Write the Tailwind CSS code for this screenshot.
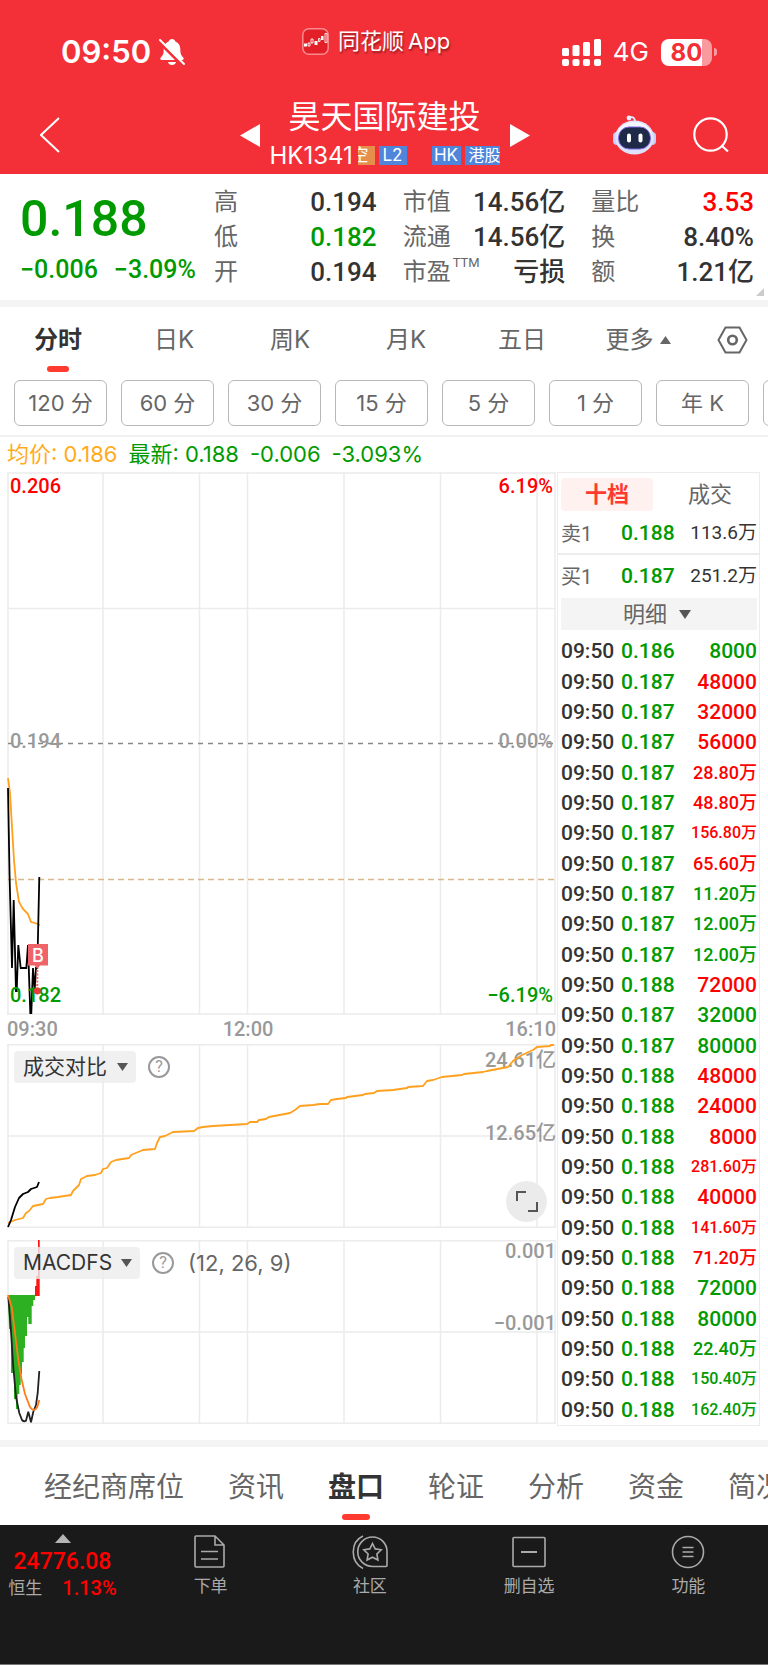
<!DOCTYPE html>
<html lang="zh-CN">

<head>
    <meta charset="UTF-8" />
    <meta name="viewport" content="width=device-width, initial-scale=1.0" />
    <title>昊天国际建投 HK1341</title>
    <script src="https://cdn.jsdelivr.net/npm/@tailwindcss/browser@4"></script>
</head>

<body class="bg-white text-[#333] font-[Inter,'Noto_Sans_CJK_SC',sans-serif] overflow-x-hidden">
    <!-- Header -->
    <header class="bg-[#f33038] text-white">
        <div class="h-24 pt-2 pl-[61px] pr-[51px] grid grid-cols-[241px_auto_1fr] items-center">
            <div class="flex items-center gap-2">
                <span class="text-[31px] leading-8 font-semibold">09:50</span>
                <svg class="w-[26px] h-7" viewBox="0 0 26 28" fill="none">
                    <path d="M13 1c1.800 0 3 1 3.300 2.400 3.500 1.300 5 4.200 5 7.600 0 5 1 6.600 3 8.600.8.900.4 2.400-1 2.400H2.700c-1.400 0-1.800-1.500-1-2.400 2-2 3-3.600 3-8.600 0-3.400 1.500-6.300 5-7.600C10 2 11.200 1 13 1zM9 24h8c-.4 2-2 3-4 3s-3.600-1-4-3z" fill="#fff" />
                    <path d="M0 4l24 24" stroke="#f33038" stroke-width="3" />
                    <path d="M1 2l24 24" stroke="#fff" stroke-width="2" stroke-linecap="round" />
                </svg>
            </div>
            <div class="self-start pt-[19px] flex items-center gap-[9px]">
                <svg class="w-[27px] h-[27px]" viewBox="0 0 27 27" fill="none">
                    <rect x=".8" y=".8" width="25.400" height="25.400" rx="6" fill="#e32028" stroke="#f98a8e" stroke-width="1.500" />
                    <path d="M2 15.500h3v3H2zM12.500 13h3v4h-3zM19 8h2.500v4H19z" fill="#fff" />
                    <path d="M6 15h2v3H6zM9 11h2v4H9zM16.500 10.500h1.500v3h-1.500zM23 5.500h2v9h-2z" stroke="#fff" stroke-width=".9" />
                </svg>
                <span class="flex gap-1 text-[22px] leading-7 [text-shadow:1px_2px_2px_rgba(0,0,0,.4)]"><span>同花顺</span><span>App</span></span>
            </div>
            <div class="flex items-center justify-end gap-3">
                <svg class="w-10 h-[27px]" viewBox="0 0 40 27" fill="#fff">
                    <rect x="1" y="9" width="7" height="8" rx="1.500" />
                    <rect x="11.500" y="6" width="7" height="11" rx="1.500" />
                    <rect x="22" y="3" width="7" height="14" rx="1.500" />
                    <rect x="33" y="0" width="7" height="17" rx="1.500" />
                    <rect x="1" y="20" width="7" height="7" rx="2" />
                    <rect x="11.500" y="20" width="7" height="7" rx="2" />
                    <rect x="22" y="20" width="7" height="7" rx="2" />
                    <rect x="33" y="20" width="7" height="7" rx="2" />
                </svg>
                <span class="text-[26px] leading-8">4G</span>
                <div class="flex items-center gap-[2px]">
                    <div class="w-[51px] h-[27px] rounded-lg bg-linear-to-r from-white from-80% to-[#f99a9e] to-80% text-[#f33038] text-[24px] leading-[27px] font-bold text-center">80</div>
                    <div class="w-[3px] h-2 rounded-r-full bg-[#f99a9e]"></div>
                </div>
            </div>
        </div>

        <div class="h-[78px] pl-10 pr-[39px] grid grid-cols-[1fr_auto_1fr] items-center">
            <button aria-label="返回" class="w-5">
                <svg class="w-5 h-9" viewBox="0 0 20 36" fill="none" stroke="#fff" stroke-width="2"><path d="M19 1L1 18l18 17" /></svg>
            </button>
            <div class="flex items-center gap-[10px]">
                <button aria-label="上一个">
                    <svg class="w-5 h-[23px]" viewBox="0 0 20 23" fill="#fff"><path d="M20 0v23L0 11.500z" /></svg>
                </button>
                <div class="w-[230px] h-[78px]">
                    <h1 class="text-[32px] leading-[41px] text-center">昊天国际建投</h1>
                    <div class="pt-[6px] flex items-center h-[30px] text-[17px] leading-[19px]">
                        <span class="w-[88px] text-[24px]">HK1341</span>
                        <span class="w-[17px] h-[19px] bg-[#e68f4a] overflow-hidden flex justify-end pr-[6px]"><span class="shrink-0">空</span></span>
                        <span class="ml-1 w-[28px] h-[19px] bg-[#4f86dc] text-center">L2</span>
                        <span class="ml-[25px] w-[29px] h-[19px] bg-[#4f86dc] text-center">HK</span>
                        <span class="ml-1 w-[35px] h-[19px] bg-[#4f86dc] pl-1 text-[16px] overflow-hidden whitespace-nowrap">港股</span>
                    </div>
                </div>
                <button aria-label="下一个">
                    <svg class="w-5 h-[23px]" viewBox="0 0 20 23" fill="#fff"><path d="M0 0v23l20-11.500z" /></svg>
                </button>
            </div>
            <div class="flex items-center justify-end gap-[37px]">
                <button aria-label="智能助手">
                    <svg class="w-[43px] h-10" viewBox="0 0 43 40" fill="none">
                        <path d="M16 3c4-2 6 0 6 4" stroke="#e9edff" stroke-width="1.800" />
                        <circle cx="16" cy="3" r="2.400" fill="#e9edff" />
                        <rect x="0" y="17" width="8" height="13" rx="4" fill="#c9cdf5" />
                        <rect x="35" y="17" width="8" height="13" rx="4" fill="#c9cdf5" />
                        <ellipse cx="21.500" cy="22.500" rx="19.500" ry="17" fill="#dfe2fb" />
                        <ellipse cx="21.500" cy="20" rx="17" ry="13" fill="#f6f8ff" />
                        <rect x="5.500" y="12" width="32" height="22" rx="10.500" fill="#1f2a48" stroke="#7b6be6" />
                        <rect x="14" y="18.500" width="4" height="9" rx="2" fill="#fff" />
                        <rect x="25.500" y="18.500" width="4" height="9" rx="2" fill="#fff" />
                    </svg>
                </button>
                <button aria-label="搜索">
                    <svg class="w-9 h-9" viewBox="0 0 36 36" fill="none" stroke="#fff" stroke-width="2.200"><circle cx="17.500" cy="17.500" r="16.200" /><path d="M28.500 28.500l6.500 6" /></svg>
                </button>
            </div>
        </div>
    </header>

    <!-- Quote -->
    <section class="relative pt-[11px] pb-[10px] pl-5 pr-[14px] grid grid-cols-[168px_repeat(3,minmax(0,1fr))] gap-x-[26px] font-[Roboto,'Noto_Sans_CJK_SC',sans-serif] border-b-[7px] border-[#f4f4f4]">
        <div class="text-[#009a00] font-medium whitespace-nowrap">
            <p class="text-[50px] leading-[68px]">0.188</p>
            <p class="text-[25px] leading-[34px] flex gap-4"><span>−0.006</span><span>−3.09%</span></p>
        </div>
        <dl class="grid grid-cols-[auto_1fr] text-[26px] leading-[35px] [&>dt]:text-[24px] [&>dt]:text-[#666] [&>dd]:text-right [&>dd]:font-medium">
            <dt>高</dt><dd>0.194</dd>
            <dt>低</dt><dd class="text-[#009a00]">0.182</dd>
            <dt>开</dt><dd>0.194</dd>
        </dl>
        <dl class="grid grid-cols-[auto_1fr] text-[26px] leading-[35px] whitespace-nowrap [&>dt]:text-[24px] [&>dt]:text-[#666] [&>dd]:text-right [&>dd]:font-medium">
            <dt>市值</dt><dd>14.56亿</dd>
            <dt>流通</dt><dd>14.56亿</dd>
            <dt class="flex">市盈<span class="w-0 pl-[2px] text-[13px] leading-[16px]">TTM</span></dt><dd>亏损</dd>
        </dl>
        <dl class="grid grid-cols-[auto_1fr] text-[26px] leading-[35px] whitespace-nowrap [&>dt]:text-[24px] [&>dt]:text-[#666] [&>dd]:text-right [&>dd]:font-medium">
            <dt>量比</dt><dd class="text-[#ff0000]">3.53</dd>
            <dt>换</dt><dd>8.40%</dd>
            <dt>额</dt><dd>1.21亿</dd>
        </dl>
        <svg class="absolute right-1 bottom-1 w-2 h-2" viewBox="0 0 8 8" fill="#ccc"><path d="M8 0v8H0z" /></svg>
    </section>

    <!-- Period tabs -->
    <nav class="h-[65px] flex text-[24px] text-[#666]">
        <button class="relative flex-1 font-bold text-[#333]">分时<span class="absolute left-1/2 bottom-0 -translate-x-1/2 w-[22px] h-[6px] rounded-full bg-[#ff3b30]"></span></button>
        <button class="flex-1">日K</button>
        <button class="flex-1">周K</button>
        <button class="flex-1">月K</button>
        <button class="flex-1">五日</button>
        <button class="flex-1 flex items-center justify-center gap-[6px]">更多<svg class="w-[11px] h-2" viewBox="0 0 11 8" fill="#666"><path d="M5.500 0L11 8H0z" /></svg></button>
        <button aria-label="设置" class="w-[72px] flex items-center justify-center">
            <svg class="w-[31px] h-7" viewBox="0 0 31 28" fill="none" stroke="#666" stroke-width="2"><path d="M8.500 1.500h14L29.500 14l-7 12.500h-14L1.500 14z" /><circle cx="15.500" cy="14" r="4.300" stroke-width="2.600" /></svg>
        </button>
    </nav>
    <div class="pt-2 pb-[9px] pl-[14px] flex gap-[14px] overflow-hidden border-b-2 border-[#f1f1f1] text-[22px] text-[#666] [&>button]:shrink-0 [&>button]:w-[93px] [&>button]:h-[46px] [&>button]:border [&>button]:border-[#b8b8b8] [&>button]:rounded-md">
        <button>120 分</button>
        <button>60 分</button>
        <button>30 分</button>
        <button>15 分</button>
        <button>5 分</button>
        <button>1 分</button>
        <button>年 K</button>
        <button>季 K</button>
    </div>
    <p class="h-[35px] pl-[7px] flex items-center gap-[11px] text-[22px] text-[#009a00] whitespace-nowrap">
        <span class="text-[#ffab1a]">均价: 0.186</span>
        <span>最新: 0.188</span>
        <span>-0.006</span>
        <span>-3.093%</span>
    </p>

    <!-- Charts and order book -->
    <main class="pl-[7px] pr-2 flex gap-px font-[Roboto,'Noto_Sans_CJK_SC',sans-serif]">
        <div class="flex-1 min-w-0 text-[20px] leading-6 font-medium text-[#999]">
            <div class="relative">
                <svg class="w-full h-[543px]" viewBox="0 0 549 543" preserveAspectRatio="none" fill="none">
                    <path d="M0 1h549M0 136.500h549M0 542h549M1 0v543M96 0v543M192.500 0v543M240.500 0v543M337 0v543M433.500 0v543M530 0v543M548 0v543" stroke="#ececec" stroke-width="1.500" />
                    <path d="M1 271.500h547" stroke="#888" stroke-width="1.300" stroke-dasharray="5 5" />
                    <path d="M1 407.500h547" stroke="#d9b98c" stroke-width="1.300" stroke-dasharray="6 4" />
                    <path d="M1 306l2 15 2 34 2 33 2 23 3 19 4 7 5 5 3 8 4 1 5 2" stroke="#ffa01e" stroke-width="1.800" />
                </svg>
                <span class="absolute left-[3px] top-[2px] text-[#ff0000]">0.206</span>
                <span class="absolute right-[3px] top-[2px] text-[#ff0000]">6.19%</span>
                <span class="absolute left-[3px] top-[257px]">0.194</span>
                <span class="absolute right-[3px] top-[257px]">0.00%</span>
                <span class="absolute right-[3px] bottom-2 text-[#009a00]">−6.19%</span>
                <svg class="absolute left-0 top-0 w-[60px] h-[543px]" viewBox="0 0 60 543" fill="none">
                    <path d="M1 316l1.500 85L5 496l1.700-68L9 519h.7l1.600-46 2.400 23h5.600l1.700-23 2.300 68h1l1.700-45 1.700 22 1.300-22h1.300l2-91" stroke="#000" stroke-width="1.800" />
                </svg>
                <span class="absolute left-[3px] bottom-2 text-[#009a00]">0.182</span>
                <svg class="absolute left-0 top-0 w-[60px] h-[543px]" viewBox="0 0 60 543">
                    <path d="M21 472h20v21.500h-8L30.300 497l-2.600-3.500H21z" fill="#ee6468" />
                    <text x="31" y="490" text-anchor="middle" font-size="18" fill="#fff" font-family="Inter">B</text>
                    <path d="M30.300 498v18" stroke="#ee6468" stroke-width="2" stroke-dasharray="2 1.500" />
                    <circle cx="30.300" cy="519" r="3.400" fill="#e83a40" />
                </svg>
            </div>
            <div class="h-[29px] leading-[29px] flex justify-between relative"><span>09:30</span><span class="absolute left-[241px] -translate-x-1/2">12:00</span><span>16:10</span></div>

            <div class="relative mb-3">
                <svg class="w-full h-[184px]" viewBox="0 0 549 184" preserveAspectRatio="none" fill="none">
                    <path d="M0 .8h549M0 92h549M0 183.300h549M1 0v184M96 0v184M192.500 0v184M240.500 0v184M337 0v184M433.500 0v184M530 0v184M548 0v184" stroke="#ececec" stroke-width="1.500" />
                </svg>
                <div class="absolute left-[7px] top-[7px] flex items-center gap-3">
                    <label class="relative">
                        <select aria-label="副图指标" class="appearance-none w-[122px] h-8 pl-[9px] rounded bg-[#ececec]/80 text-[21px] leading-8 font-normal text-[#333]"><option>成交对比</option></select>
                        <svg class="absolute right-2 top-3 w-[11px] h-2" viewBox="0 0 11 8" fill="#555"><path d="M0 0h11L5.500 8z" /></svg>
                    </label>
                    <button aria-label="说明" class="w-[22px] h-[22px] rounded-full border-2 border-[#999] text-[16px] leading-[18px] font-normal">?</button>
                </div>
                <span class="absolute right-0 top-1">24.61亿</span>
                <span class="absolute right-0 top-[77px]">12.65亿</span>
                <svg class="absolute left-0 top-0 w-full h-[184px] pointer-events-none" viewBox="0 0 549 184" preserveAspectRatio="none" fill="none" stroke-width="1.800" stroke-linejoin="round">
                    <polyline stroke="#ffa01e" points="1,179 8,176 16,174 19,169 22,167 26,162 36,160 39,155 43,154 51,153 64,151 66,147 72,141 74,135 80,132 88,131 94,129 96,125 100,124 104,118 109,116 122,114 124,111 136,106 148,105 150,99 153,93 158,92 166,88 187,87 191,84 196,83 206,82 240,80 243,78 250,78 252,76 259,75 262,73 283,69 288,66 293,62 306,61 313,60 321,60 324,56 330,55 339,54 340,53 356,51 358,50 367,49 370,47 386,46 400,44 401,43 416,42 420,37 426,36 435,33 455,31 457,30 476,28 480,27 501,23 506,17 515,11 526,6 530,3 543,2 544,1 547,1" />
                    <polyline stroke="#000" points="1,183 4,176 8,163 12,154 16,150 21,148 24,145 30,143 32,138" />
                </svg>
                <button aria-label="全屏" class="absolute right-[9px] bottom-[6px] w-[41px] h-[41px] rounded-full bg-[#ebebeb]">
                    <svg class="w-[41px] h-[41px]" viewBox="0 0 41 41" fill="none" stroke="#555" stroke-width="2"><path d="M11 20v-9h9M31 21v9h-9" /></svg>
                </button>
            </div>

            <div class="relative">
                <svg class="w-full h-[184px]" viewBox="0 0 549 184" preserveAspectRatio="none" fill="none">
                    <path d="M0 .8h549M0 92h549M0 183.300h549M1 0v184M96 0v184M192.500 0v184M240.500 0v184M337 0v184M433.500 0v184M530 0v184M548 0v184" stroke="#ececec" stroke-width="1.500" />
                    <path d="M1 55h27v5h-1.700v6h-1.600v18h-3.400v-7H20v19h-2v12h-1.300v14H15v12h-1.300v11h-1.400v9h-1.600v15H9v-10H7v-26H4V89H2z" fill="#2db021" />
                    <path d="M28 46h1.300V36H31V0h1.700v56H28z" fill="#ff1515" />
                    <path d="M1.300 57l2.400 30 2.600 40 2.700 30 3.300 16 2.700 7q2 2 4 .7l2.300-9 2.700 10.600 2.300-10.600L29 165l1.700-12 1.600-22" stroke="#222" stroke-width="1.800" />
                    <path d="M1 55l3.700 12L8 93l3.300 27 3.400 20 3.300 14 5 13q4 6 7.300 0l2-7" stroke="#ff7d1a" stroke-width="1.800" />
                </svg>
                <div class="absolute left-[7px] top-[7px] flex items-center gap-3">
                    <label class="relative">
                        <select aria-label="技术指标" class="appearance-none w-[126px] h-8 pl-[9px] rounded bg-[#ececec]/80 font-[Inter] text-[21px] leading-8 font-normal text-[#333]"><option>MACDFS</option></select>
                        <svg class="absolute right-2 top-3 w-[11px] h-2" viewBox="0 0 11 8" fill="#555"><path d="M0 0h11L5.500 8z" /></svg>
                    </label>
                    <button aria-label="说明" class="w-[22px] h-[22px] rounded-full border-2 border-[#999] text-[16px] leading-[18px] font-normal">?</button>
                    <span class="pl-[2px] font-[Inter] text-[22px] font-normal text-[#666]">(12, 26, 9)</span>
                </div>
                <span class="absolute right-0 top-[-1px]">0.001</span>
                <span class="absolute right-0 top-[71px]">−0.001</span>
            </div>
        </div>

        <aside class="w-[203px] pl-[3px] pr-[2px] pt-[5px] border border-[#ececec]">
            <div class="flex text-[22px] leading-[33px] text-[#666]">
                <button class="w-[92px] rounded bg-[#fff1f0] font-bold text-[#ff3b30]">十档</button>
                <button class="flex-1 pl-[10px]">成交</button>
            </div>
            <dl class="-ml-1 -mr-[3px] pl-1 pr-[3px] pt-[3px] h-11 flex items-center border-b-2 border-[#ececec] text-[21px]">
                <dt class="w-[60px] text-[20px] text-[#666]">卖1</dt><dd class="flex-1 font-medium text-[#009a00]">0.188</dd><dd class="text-[19px]">113.6万</dd>
            </dl>
            <dl class="h-[43px] flex items-center text-[21px]">
                <dt class="w-[60px] text-[20px] text-[#666]">买1</dt><dd class="flex-1 font-medium text-[#009a00]">0.187</dd><dd class="text-[19px]">251.2万</dd>
            </dl>
            <button class="w-full h-8 bg-[#f4f4f4] flex items-center justify-center gap-3 pr-1 text-[22px] text-[#666]">明细<svg class="w-3 h-[9px]" viewBox="0 0 12 9" fill="#555"><path d="M0 0h12L6 9z" /></svg></button>
            <table class="mt-[6px] w-full h-[789px] text-[21px] leading-[26px] font-medium">
                <tbody id="ticks"></tbody>
            </table>
        </aside>
    </main>

    <!-- Section tabs -->
    <nav class="mt-[14px] h-[85px] pt-[2px] pl-[44px] border-t-[7px] border-[#f4f4f4] flex gap-11 overflow-hidden whitespace-nowrap text-[28px] text-[#666] [&>button]:shrink-0">
        <button>经纪商席位</button>
        <button>资讯</button>
        <button class="relative font-bold text-[#333]">盘口<span class="absolute left-1/2 bottom-[5px] -translate-x-1/2 w-7 h-[6px] rounded-full bg-[#ff3b30]"></span></button>
        <button>轮证</button>
        <button>分析</button>
        <button>资金</button>
        <button>简况</button>
    </nav>

    <!-- Bottom bar -->
    <footer class="h-[140px] bg-[#1a1a1a] border-b border-[#777] flex text-[17px] leading-6 text-[#aaa]">
        <a href="#" class="w-[131px] pt-[9px] pr-[6px] flex flex-col items-center">
            <svg class="w-4 h-[9px]" viewBox="0 0 16 9" fill="#b5b5b5"><path d="M8 0l8 9H0z" /></svg>
            <span class="mt-[5px] font-[Roboto] font-medium text-[23px] leading-7 text-[#ff0000]">24776.08</span>
            <span class="flex items-center gap-5">恒生<b class="font-[Roboto] font-medium text-[20px] text-[#ff0000]">1.13%</b></span>
        </a>
        <a href="#" class="flex-1 pt-[9px] flex flex-col items-center gap-[2px]">
            <svg class="w-9 h-[38px]" viewBox="0 0 36 38" fill="none" stroke="#aaa" stroke-width="1.600"><path d="M3 2h19l9 9v21q0 1-1 1H3q-1 0-1-1V3q0-1 1-1zM22 2v9h9M8 17.500h17M8 25h17" /></svg>
            <span>下单</span>
        </a>
        <a href="#" class="flex-1 pt-[9px] flex flex-col items-center gap-[2px]">
            <svg class="w-9 h-[38px]" viewBox="0 0 36 38" fill="none" stroke="#aaa" stroke-width="1.600"><path d="M11 2C-2 8-2 28 11 34.500M20.500 3a14.500 14.500 0 0 0 0 29.500H34q1 0 1-1V18A14.500 14.500 0 0 0 20.500 3z" /><path d="M20.500 9.500l2.700 5.400 6 .9-4.300 4.200 1 6-5.400-2.800-5.400 2.800 1-6-4.300-4.200 6-.9z" /></svg>
            <span>社区</span>
        </a>
        <a href="#" class="flex-1 pt-[9px] flex flex-col items-center gap-[2px]">
            <svg class="w-9 h-[38px]" viewBox="0 0 36 38" fill="none" stroke="#aaa" stroke-width="1.600"><rect x="2" y="3.500" width="32" height="29" rx="1" /><path d="M10 18h16" stroke-width="2" /></svg>
            <span>删自选</span>
        </a>
        <a href="#" class="flex-1 pt-[9px] flex flex-col items-center gap-[2px]">
            <svg class="w-9 h-[38px]" viewBox="0 0 36 38" fill="none" stroke="#aaa" stroke-width="1.600"><circle cx="18" cy="18" r="15.500" /><path d="M12.500 13.500h11M12.500 18h11M12.500 22.500h11" /></svg>
            <span>功能</span>
        </a>
    </footer>

    <script>
        // price, volume, direction (1 = buy, 0 = sell)
        const ticks = [
            ['0.186', '8000', 0], ['0.187', '48000', 1], ['0.187', '32000', 1], ['0.187', '56000', 1],
            ['0.187', '28.80万', 1], ['0.187', '48.80万', 1], ['0.187', '156.80万', 1], ['0.187', '65.60万', 1],
            ['0.187', '11.20万', 0], ['0.187', '12.00万', 0], ['0.187', '12.00万', 0], ['0.188', '72000', 1],
            ['0.187', '32000', 0], ['0.187', '80000', 0], ['0.188', '48000', 1], ['0.188', '24000', 1],
            ['0.188', '8000', 1], ['0.188', '281.60万', 1], ['0.188', '40000', 1], ['0.188', '141.60万', 1],
            ['0.188', '71.20万', 1], ['0.188', '72000', 0], ['0.188', '80000', 0], ['0.188', '22.40万', 0],
            ['0.188', '150.40万', 0], ['0.188', '162.40万', 0]
        ];

        // longer volumes get smaller text
        function volumeSize(volume) {
            if (volume.length > 6) return 'text-[16px]';
            if (volume.length > 5) return 'text-[18px]';
            return 'text-[21px]';
        }

        document.getElementById('ticks').innerHTML = ticks.map(([price, volume, up]) => `
            <tr>
                <td class="p-0 w-[60px]">09:50</td>
                <td class="p-0 text-[#009a00]">${price}</td>
                <td class="p-0 text-right ${up ? 'text-[#ff0000]' : 'text-[#009a00]'} ${volumeSize(volume)}">${volume}</td>
            </tr>
        `).join('');
    </script>
</body>

</html>
